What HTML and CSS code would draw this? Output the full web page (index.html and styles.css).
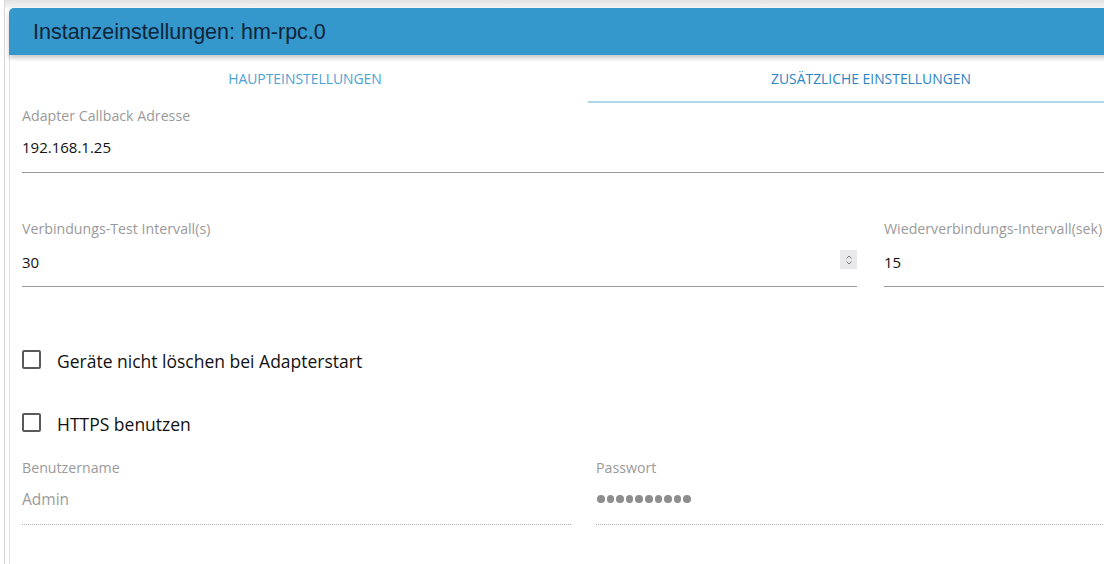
FILE: index.html
```html
<!DOCTYPE html>
<html lang="de">
<head>
<meta charset="utf-8">
<title>Instanzeinstellungen</title>
<link rel="stylesheet" href="styles.css">
</head>
<body>
<div class="frame">
  <div class="panel">
    <header class="titlebar"><h1 class="title">Instanzeinstellungen: hm-rpc.0</h1></header>
    <div class="content">
      <nav class="tabs">
        <div class="tab">HAUPTEINSTELLUNGEN</div>
        <div class="tab active">ZUSÄTZLICHE EINSTELLUNGEN</div>
      </nav>
      <div class="field full">
        <label class="label">Adapter Callback Adresse</label>
        <div class="value">192.168.1.25</div>
      </div>
      <div class="row two">
        <div class="field">
          <label class="label">Verbindungs-Test Intervall(s)</label>
          <div class="value with-spin">30
            <span class="spin"><svg width="10" height="14" viewBox="0 0 10 14"><path d="M2.5 5.5 L5 3 L7.5 5.5" fill="none" stroke="#777" stroke-width="1"/><path d="M2.5 8.5 L5 11 L7.5 8.5" fill="none" stroke="#777" stroke-width="1"/></svg></span>
          </div>
        </div>
        <div class="field">
          <label class="label">Wiederverbindungs-Intervall(sek)</label>
          <div class="value">15</div>
        </div>
      </div>
      <div class="check first"><span class="box"></span><span class="check-text">Geräte nicht löschen bei Adapterstart</span></div>
      <div class="check"><span class="box"></span><span class="check-text">HTTPS benutzen</span></div>
      <div class="row half">
        <div class="field disabled">
          <label class="label">Benutzername</label>
          <div class="value">Admin</div>
        </div>
        <div class="field disabled">
          <label class="label">Passwort</label>
          <div class="value dots"><span class="dot"></span><span class="dot"></span><span class="dot"></span><span class="dot"></span><span class="dot"></span><span class="dot"></span><span class="dot"></span><span class="dot"></span><span class="dot"></span><span class="dot"></span></div>
        </div>
      </div>
    </div>
  </div>
</div>
</body>
</html>
```
FILE: styles.css
```css
html, body {
  margin: 0;
  padding: 0;
  overflow: hidden;
  width: 1104px;
  height: 564px;
  background: #ffffff;
}
body {
  font-family: "Open Sans", "Noto Sans", sans-serif;
}
.frame {
  height: 564px;
  padding-top: 8px;
  padding-left: 8px;
  box-sizing: border-box;
  background: linear-gradient(#e2e2e2 0, #f2f2f2 7px, #ffffff 8px);
  border-left: 1px solid #ffffff;
  box-shadow: inset 3px 0 0 #ffffff, inset 4px 0 0 #d8d8d8;
}
.panel {
  width: 1180px;
  height: 100%;
  background: #fff;
  border-left: 1px solid #e0e0e0;
  border-top-left-radius: 5px;
}
.titlebar {
  background: #3598cc;
  height: 47px;
  border-top-left-radius: 5px;
  box-shadow: 0 3px 5px rgba(0,0,0,0.22);
  display: flex;
  align-items: center;
  padding-left: 24px;
  margin-left: -1px;
}
.title {
  margin: 0;
  font-family: "Liberation Sans", Arial, sans-serif;
  font-weight: normal;
  font-size: 21.5px;
  color: #10243a;
  padding-top: 2px;
}
.content {
  padding-left: 12px;
  width: 1132px;
}
.tabs {
  display: flex;
  height: 48px;
}
.tab {
  flex: 1;
  text-align: center;
  font-size: 13.9px;
  color: #4da2d4;
  padding-top: 14px;
  box-sizing: border-box;
}
.tab.active {
  color: #2c84c2;
  border-bottom: 2px solid #acd7e4;
}
.label {
  display: block;
  font-size: 14.2px;
  color: #9a9a9a;
  line-height: 18px;
}
.value {
  font-size: 15px;
  color: #111;
  line-height: 20px;
  padding-top: 12px;
  padding-bottom: 15px;
  border-bottom: 1px solid #9a9a9a;
  position: relative;
}
.field.full {
  margin-top: 4px;
}
.row {
  display: grid;
}
.row.two {
  grid-template-columns: 835px 1fr;
  column-gap: 27px;
  margin-top: 47px;
}
.row.two .value {
  padding-top: 14px;
  padding-bottom: 14px;
}
.spin {
  position: absolute;
  right: 0;
  top: 12px;
  width: 17px;
  height: 19px;
  background: #e9e9ec;
  display: flex;
  align-items: center;
  justify-content: center;
}
.check {
  display: flex;
  align-items: center;
  height: 20px;
}
.check.first {
  margin-top: 62px;
}
.check + .check {
  margin-top: 43px;
}
.box {
  width: 15px;
  height: 15px;
  border: 2px solid #5a5a5a;
  border-radius: 2px;
  margin-right: 16px;
}
.check-text {
  font-size: 17.5px;
  line-height: 20px;
  color: #111;
  padding-top: 4px;
}
.row.half {
  grid-template-columns: 549px 549px;
  column-gap: 25px;
  margin-top: 27px;
}
.field.disabled .value {
  color: #9a9a9a;
  font-size: 15.5px;
  border-bottom: 1px dotted #b0b0b0;
}
.value.dots {
  display: flex;
  align-items: center;
  gap: 2px;
  height: 20px;
  padding-left: 1px;
}
.dot {
  width: 7.6px;
  height: 7.6px;
  border-radius: 50%;
  background: #8e8e8e;
}
```
